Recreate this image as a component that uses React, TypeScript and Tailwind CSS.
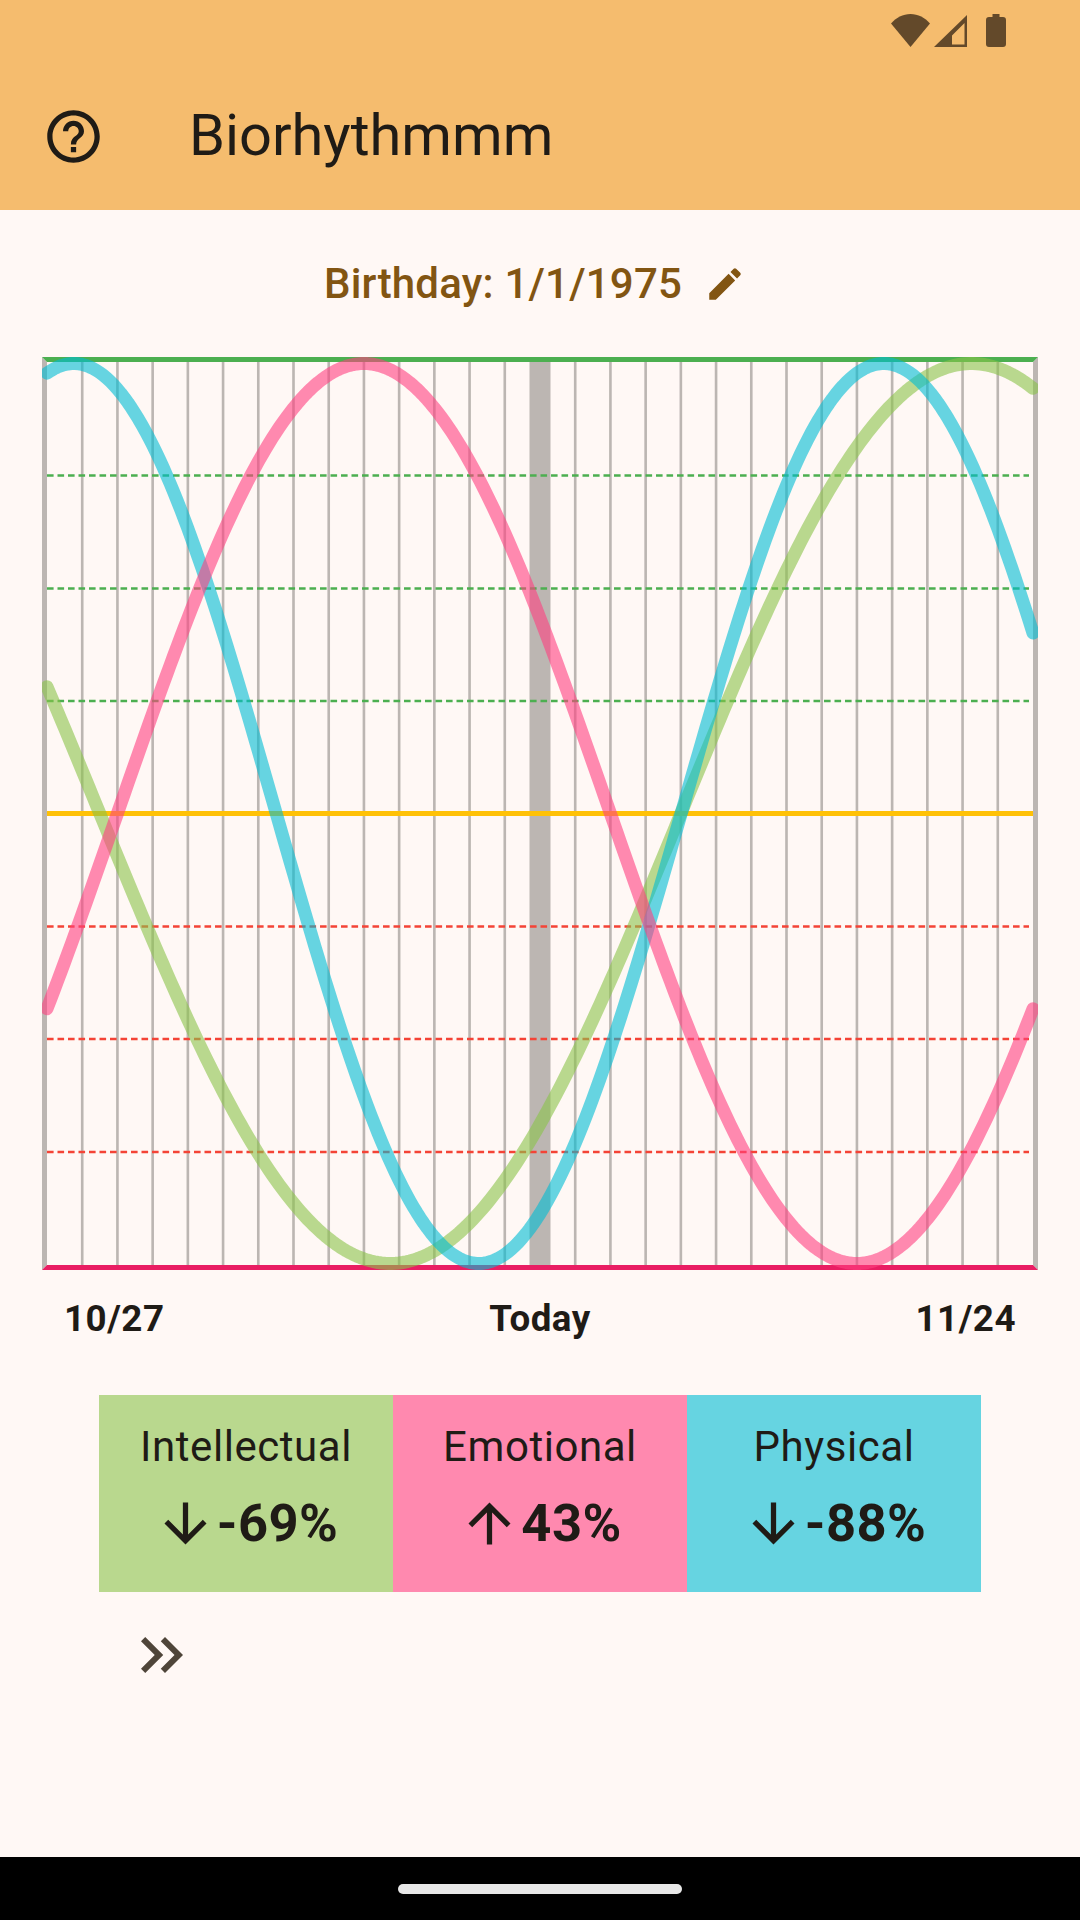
const W = 996;
const H = 913;
const left = 5;
const dayW = 35.214;
const mid = 456.5;
const amp = 450;

function curve(period: number, peak: number) {
  const pts: string[] = [];
  for (let i = 0; i <= 280; i++) {
    const d = i / 10;
    const v = Math.cos((2 * Math.PI * (d - peak)) / period);
    pts.push(`${(left + d * dayW).toFixed(2)},${(mid - v * amp).toFixed(2)}`);
  }
  return pts.join(" ");
}

function Chart() {
  const days = Array.from({ length: 27 }, (_, i) => i + 1);
  return (
    <svg width={W} height={H} viewBox={`0 0 ${W} ${H}`} className="block">
      {days.map((d) =>
        d === 14 ? (
          <rect key={d} x={left + d * dayW - 10.5} y={5} width={21} height={903} fill="#bcb6b2" />
        ) : (
          <rect key={d} x={left + d * dayW - 1.31} y={5} width={2.625} height={903} fill="#bcb6b2" />
        )
      )}
      {[118.5, 231.5, 344].map((y) => (
        <line key={y} x1={5} x2={987} y1={y} y2={y} stroke="#4caf50" strokeWidth={2.625} strokeDasharray="6.6 3.9" />
      ))}
      {[569.5, 682, 795].map((y) => (
        <line key={y} x1={5} x2={987} y1={y} y2={y} stroke="#f44336" strokeWidth={2.625} strokeDasharray="6.6 3.9" />
      ))}
      <rect x={5} y={454} width={986} height={5} fill="#ffc107" />
      <polygon points={`0,0 5,5 5,908 0,913`} fill="#bcb6b2" />
      <polygon points={`${W},0 ${W - 5},5 ${W - 5},908 ${W},913`} fill="#bcb6b2" />
      <polygon points={`0,0 ${W},0 ${W - 5},5 5,5`} fill="#4caf50" />
      <polygon points={`0,913 ${W},913 ${W - 5},908 5,908`} fill="#e91e63" />
      <polyline points={curve(33, 26.25)} fill="none" stroke="#8bc34a" strokeOpacity={0.6} strokeWidth={13} strokeLinecap="round" strokeLinejoin="round" />
      <polyline points={curve(23, 0.76)} fill="none" stroke="#00bcd4" strokeOpacity={0.6} strokeWidth={13} strokeLinecap="round" strokeLinejoin="round" />
      <polyline points={curve(28, 9)} fill="none" stroke="#ff4081" strokeOpacity={0.6} strokeWidth={13} strokeLinecap="round" strokeLinejoin="round" />
    </svg>
  );
}

function Arrow({ up }: { up?: boolean }) {
  return (
    <svg width={63} height={63} viewBox="0 0 24 24" fill="currentColor" className="block">
      <path
        d={
          up
            ? "M4 12l1.41 1.41L11 7.83V20h2V7.83l5.58 5.59L20 12l-8-8-8 8z"
            : "M20 12l-1.41-1.41L13 16.17V4h-2v12.17l-5.58-5.59L4 12l8 8 8-8z"
        }
      />
    </svg>
  );
}

function Card({ label, value, up, bg }: { label: string; value: string; up?: boolean; bg: string }) {
  return (
    <div className={`flex h-[197px] w-[294px] flex-col items-center ${bg}`}>
      <div className="mt-[27px] text-[42px] leading-[50px] tracking-[0.55px]">{label}</div>
      <div className="mt-[20px] flex h-[63px] items-center">
        <Arrow up={up} />
        <div className="text-[52.5px] leading-[63px] font-bold tracking-[0.4px]">{value}</div>
      </div>
    </div>
  );
}

export default function App() {
  return (
    <div
      className="flex h-[1920px] w-[1080px] flex-col overflow-hidden bg-[#fff8f5] text-[#1f1b16]"
      style={{ fontFamily: "Roboto, 'Noto Sans', sans-serif" }}
    >
      <header className="h-[210px] shrink-0 bg-[#f5bc6e]">
        <div className="flex h-[64px] items-start justify-end pt-[14px] pr-[74px] text-[#63492a]">
          <svg width={39} height={33} viewBox="0 0 39 33" fill="currentColor" className="block">
            <path d="M19.5 33 0 9.5C5 3.6 12 0 19.5 0S34 3.6 39 9.5Z" />
          </svg>
          <svg width={34} height={33} viewBox="0 0 34 33" className="ml-[4px] block" fill="currentColor" fillRule="evenodd">
            <path d="M33 1v32H0ZM30.5 9 18 21.5v9h12.5Z" />
          </svg>
          <svg width={20} height={33} viewBox="0 0 20 33" className="ml-[18px] block" fill="currentColor">
            <path d="M6.5 0h7v3H17a3 3 0 0 1 3 3v24a3 3 0 0 1-3 3H3a3 3 0 0 1-3-3V6a3 3 0 0 1 3-3h3.500Z" />
          </svg>
        </div>
        <div className="flex h-[144px] items-center pl-[42px]">
          <svg width={63} height={63} viewBox="0 0 24 24" fill="currentColor" className="block">
            <path d="M11 18h2v-2h-2v2zm1-16C6.480 2 2 6.480 2 12s4.480 10 10 10 10-4.480 10-10S17.520 2 12 2zm0 18c-4.410 0-8-3.590-8-8s3.590-8 8-8 8 3.590 8 8-3.590 8-8 8zm0-14c-2.210 0-4 1.790-4 4h2c0-1.100.9-2 2-2s2 .9 2 2c0 2-3 1.750-3 5h2c0-2.250 3-2.500 3-5 0-2.210-1.790-4-4-4z" />
          </svg>
          <h1 className="-mt-[2px] ml-[84px] text-[57.75px] leading-[70px] font-normal">Biorhythmmm</h1>
        </div>
      </header>

      <div className="mt-[53px] flex h-[42px] items-center justify-center pr-[10px] text-[#825512]">
        <span className="text-[42px] leading-[50px] font-medium tracking-[0.2px]">Birthday: 1/1/1975</span>
        <svg width={42} height={42} viewBox="0 0 24 24" fill="currentColor" className="ml-[22px] block">
          <path d="M3 17.250V21h3.750L17.810 9.940l-3.750-3.750L3 17.250zM20.710 7.040a1 1 0 0 0 0-1.410l-2.340-2.340a1 1 0 0 0-1.410 0l-1.830 1.830 3.750 3.750 1.830-1.830z" />
        </svg>
      </div>

      <div className="mt-[52px] ml-[42px]">
        <Chart />
      </div>

      <div className="mt-[27px] flex justify-between px-[64px] text-[36.75px] leading-[44px] font-bold tracking-[0.5px]">
        <span>10/27</span>
        <span>Today</span>
        <span>11/24</span>
      </div>

      <div className="mt-[54px] ml-[99px] flex">
        <Card label="Intellectual" value="-69%" bg="bg-[#b9d88e]" />
        <Card label="Emotional" value="43%" up bg="bg-[#ff89af]" />
        <Card label="Physical" value="-88%" bg="bg-[#66d4e1]" />
      </div>

      <div className="mt-[27px] ml-[126px] text-[#4f4539]">
        <svg width={72} height={72} viewBox="0 0 24 24" fill="currentColor" className="block">
          <path d="M6.410 6 5 7.410 9.580 12 5 16.590 6.410 18l6-6z" />
          <path d="M13 6l-1.410 1.410L16.170 12l-4.580 4.590L13 18l6-6z" />
        </svg>
      </div>

      <div className="mt-auto flex h-[63px] items-center justify-center bg-black">
        <div className="h-[10px] w-[284px] rounded-full bg-[#e8e8e8]" />
      </div>
    </div>
  );
}
